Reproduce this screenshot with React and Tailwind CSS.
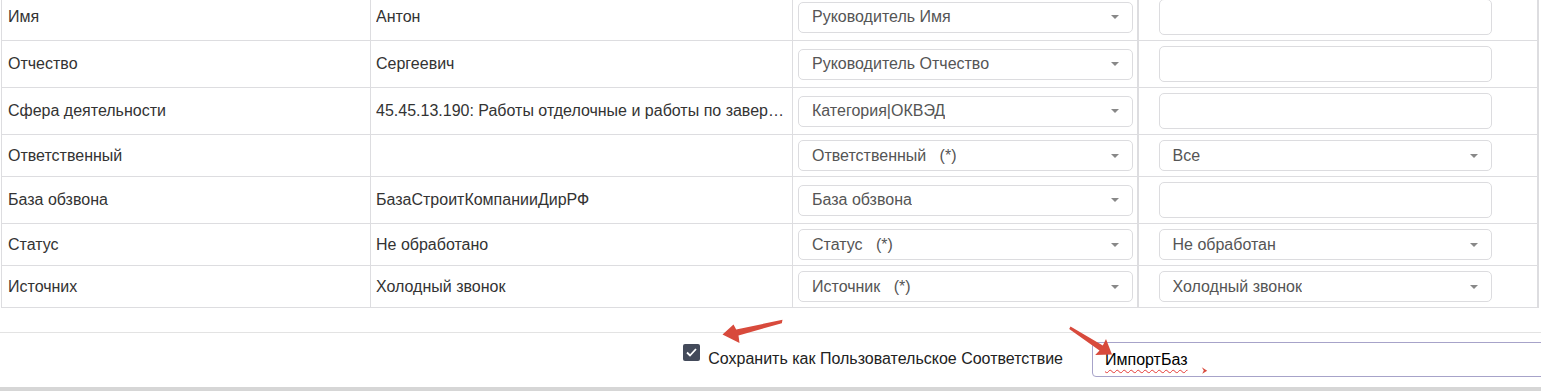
import React from 'react';

const rows = [
  { label: 'Имя', value: 'Антон', map: 'Руководитель Имя', extra: null },
  { label: 'Отчество', value: 'Сергеевич', map: 'Руководитель Отчество', extra: null },
  {
    label: 'Сфера деятельности',
    value: '45.45.13.190: Работы отделочные и работы по завершению строительства',
    map: 'Категория|ОКВЭД',
    extra: null,
  },
  { label: 'Ответственный', value: '', map: 'Ответственный   (*)', extra: 'Все' },
  { label: 'База обзвона', value: 'БазаСтроитКомпанииДирРФ', map: 'База обзвона', extra: null },
  { label: 'Статус', value: 'Не обработано', map: 'Статус   (*)', extra: 'Не обработан' },
  { label: 'Источних', value: 'Холодный звонок', map: 'Источник   (*)', extra: 'Холодный звонок' },
];

function Select({ text }) {
  return (
    <div className="flex items-center justify-between h-[31px] pl-[13px] pr-[13px] bg-white border border-[#dcdcdf] rounded-[5px] text-[#555]">
      <span className="whitespace-pre truncate">{text}</span>
      <span className="w-0 h-0 border-x-[4px] border-x-transparent border-t-[4px] border-t-[#888]" />
    </div>
  );
}

function Arrows() {
  // red annotation arrows drawn on top of the screenshot
  return (
    <svg className="absolute inset-0 pointer-events-none" width="1541" height="391">
      <polygon
        fill="#d84a3c"
        points="782.5,319.8 781.8,323.2 738.5,335.5 739.5,343 722.5,334.5 733.5,324.5 736.2,329.5"
      />
      <polygon
        fill="#d84a3c"
        points="1070.5,326.5 1069.2,329 1099.5,350.5 1095.2,355 1112,354.5 1106,339 1102.8,345.5"
      />
      <polygon fill="#d84a3c" points="1201.8,367.2 1207.2,370.8 1202.2,373.8 1203.8,370.6" />
    </svg>
  );
}

export default function App() {
  return (
    <div
      className="relative h-[391px] w-[1541px] overflow-hidden bg-white text-[16px] text-[#333]"
      style={{ fontFamily: '"Liberation Sans", Arial, sans-serif' }}
    >
      <div className="pl-[1px] -mt-[7px]">
        <table className="table-fixed border-collapse w-[1536px]">
          <colgroup>
            <col className="w-[369px]" />
            <col className="w-[422px]" />
            <col className="w-[345px]" />
            <col className="w-[400px]" />
          </colgroup>
          <tbody>
            {rows.map((r) => (
              <tr key={r.label}>
                <td className="border border-[#dddde0] px-[6px] py-[5px] align-middle">{r.label}</td>
                <td className="border border-[#dddde0] pl-[5px] pr-[6px] py-[5px] align-middle overflow-hidden">
                  <div className="truncate">{r.value}</div>
                </td>
                <td className="border border-[#dddde0] pl-[5px] pr-[4px] py-[5px] align-middle">
                  <Select text={r.map} />
                </td>
                <td className="border border-[#dddde0] border-x-2 pl-[20px] pr-[45px] py-[5px] align-middle">
                  {r.extra ? (
                    <Select text={r.extra} />
                  ) : (
                    <div className="h-[36px] bg-white border border-[#dcdcdf] rounded-[5px]" />
                  )}
                </td>
              </tr>
            ))}
          </tbody>
        </table>
      </div>

      <div className="mt-[24px] border-t border-[#e3e3e3] h-[55px] flex justify-end items-start pt-[9px]">
        <label className="flex items-start pt-[2px]">
          <span className="flex items-center justify-center w-[17px] h-[17px] bg-[#434a5a] rounded-[2px]">
            <svg width="11" height="9" viewBox="0 0 11 9">
              <path d="M1 4.5 L4 7.5 L10 1" fill="none" stroke="#fff" strokeWidth="1.8" />
            </svg>
          </span>
          <span className="ml-[8px] mt-[5px] leading-[20px] text-[#222]">
            Сохранить как Пользовательское Соответствие
          </span>
        </label>
        <div className="ml-[29px] -mr-[12px] w-[461px] h-[35px] border border-[#a7a3c9] rounded-[4px] flex items-center pl-[12px]">
          <span className="text-black underline decoration-wavy decoration-[#e53935] underline-offset-[4px] decoration-[1px]">
            ИмпортБаз
          </span>
        </div>
      </div>

      <div className="h-[4px] bg-[#d6d6d6]" />

      <Arrows />
    </div>
  );
}
